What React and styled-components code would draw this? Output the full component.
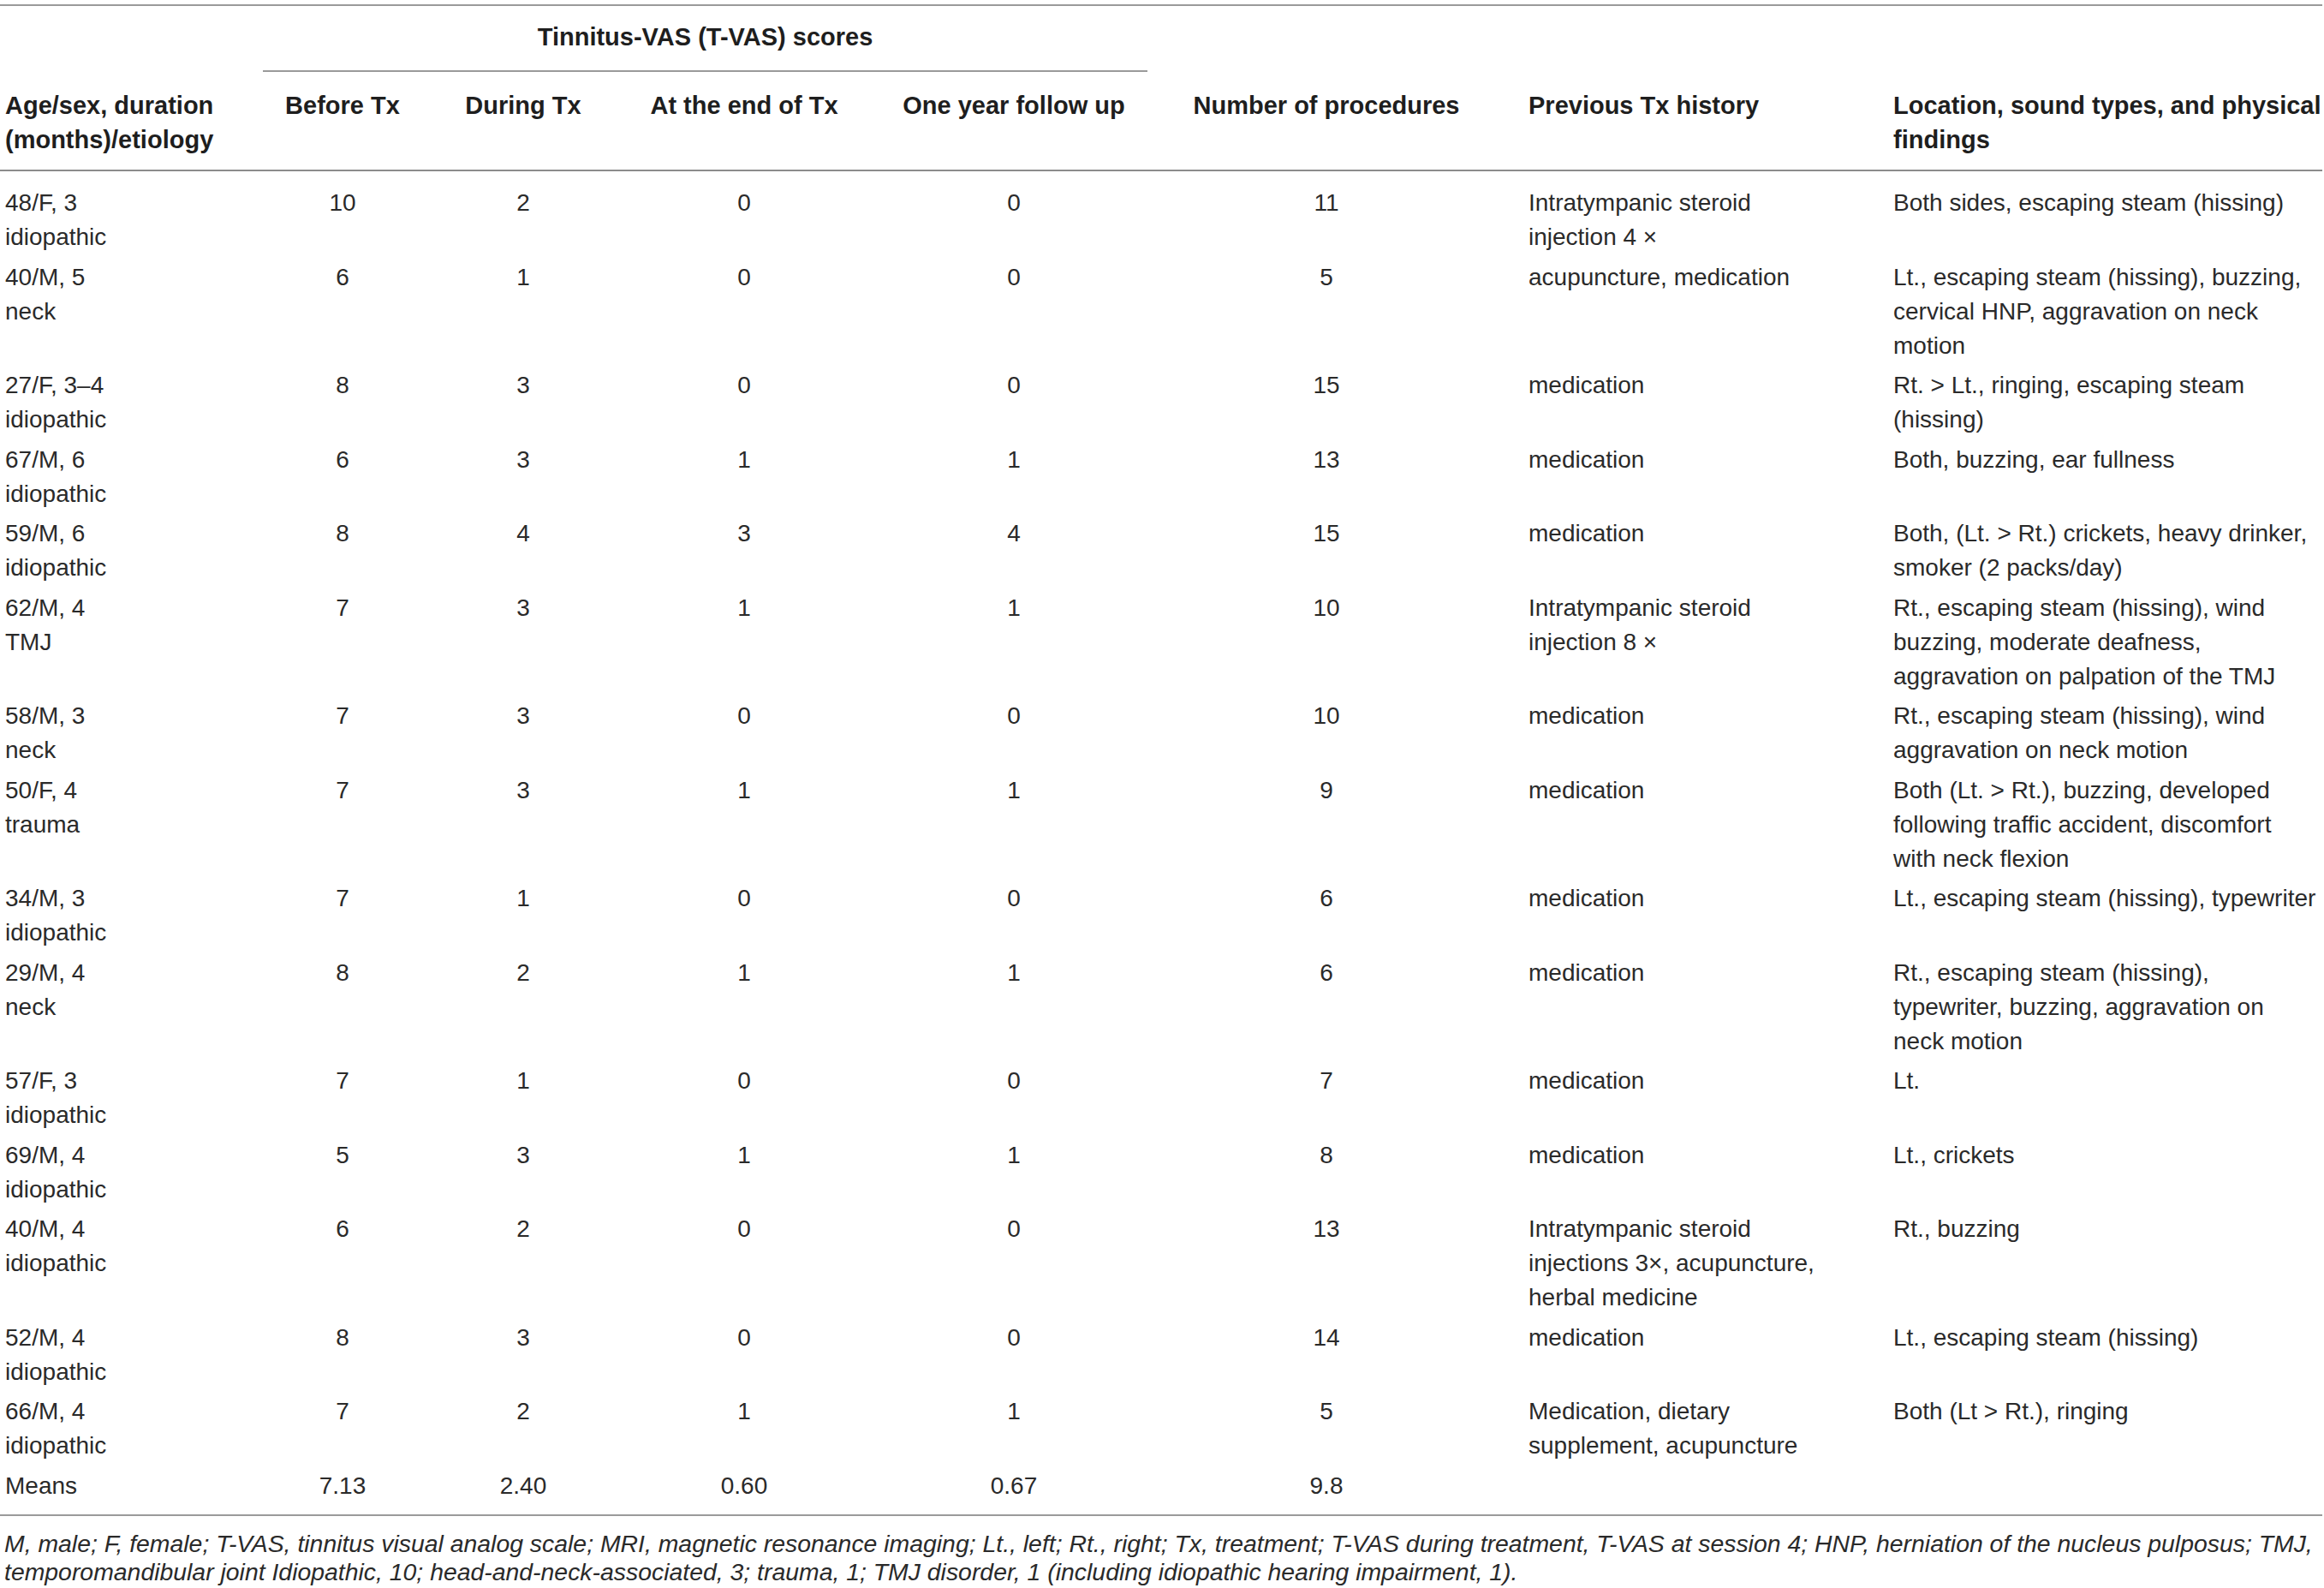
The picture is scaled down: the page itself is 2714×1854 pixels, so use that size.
import React from "react";
import styled, { createGlobalStyle } from "styled-components";

const GlobalStyle = createGlobalStyle`
  html, body {
    margin: 0;
    padding: 0;
    background: #ffffff;
    overflow: hidden;
  }
  body {
    font-family: "Liberation Sans", Arial, sans-serif;
    color: #222222;
  }
`;

const Page = styled.div`
  width: 2714px;
  padding-top: 5px;
`;

const Table = styled.table`
  width: 2712px;
  border-collapse: collapse;
  table-layout: fixed;
  border-top: 2px solid #9a9a9a;
  border-bottom: 2px solid #9a9a9a;
  font-size: 28px;
  line-height: 40px;
`;

const HeadCell = styled.th`
  font-weight: 700;
  font-size: 29px;
  color: #1e1e1e;
  text-align: ${(p) => (p.$align === "left" ? "left" : "center")};
  vertical-align: top;
  padding: ${(p) => (p.$top ? "16px" : "19px")} 0 ${(p) => (p.$top ? "0" : "15px")}
    ${(p) => p.$pl || 0}px;
  white-space: nowrap;
`;

const HeadRow = styled.tr`
  border-bottom: ${(p) => (p.$last ? "2px solid #8c8c8c" : "none")};
`;

const GroupLabel = styled.div`
  border-bottom: 2px solid #9a9a9a;
  padding-bottom: 19px;
  margin-right: 19px;
  text-align: center;
`;

const BodyRow = styled.tr`
  &:first-child td {
    padding-top: 17px;
  }
  &:last-child td {
    padding-bottom: 13px;
  }
`;

const Cell = styled.td`
  font-weight: 400;
  color: #2a2a2a;
  text-align: ${(p) => (p.$align === "left" ? "left" : "center")};
  vertical-align: top;
  padding: 3px 0 3.5px ${(p) => p.$pl || 0}px;
  white-space: nowrap;
`;

const Footnote = styled.p`
  margin: 0;
  padding: 16px 0 0 5px;
  font-style: italic;
  font-size: 28.4px;
  line-height: 33px;
  color: #2a2a2a;
  white-space: nowrap;
`;

const cols = [
  { w: 307, align: "left", pl: 6 },
  { w: 186 },
  { w: 236 },
  { w: 280 },
  { w: 350 },
  { w: 380 },
  { w: 458, align: "left", pl: 46 },
  { w: 515, align: "left", pl: 14 },
];

const rows = [
  [["48/F, 3", "idiopathic"], "10", "2", "0", "0", "11", ["Intratympanic steroid", "injection 4 \u00d7"], ["Both sides, escaping steam (hissing)"]],
  [["40/M, 5", "neck"], "6", "1", "0", "0", "5", ["acupuncture, medication"], ["Lt., escaping steam (hissing), buzzing,", "cervical HNP, aggravation on neck", "motion"]],
  [["27/F, 3\u20134", "idiopathic"], "8", "3", "0", "0", "15", ["medication"], ["Rt. > Lt., ringing, escaping steam", "(hissing)"]],
  [["67/M, 6", "idiopathic"], "6", "3", "1", "1", "13", ["medication"], ["Both, buzzing, ear fullness"]],
  [["59/M, 6", "idiopathic"], "8", "4", "3", "4", "15", ["medication"], ["Both, (Lt. > Rt.) crickets, heavy drinker,", "smoker (2 packs/day)"]],
  [["62/M, 4", "TMJ"], "7", "3", "1", "1", "10", ["Intratympanic steroid", "injection 8 \u00d7"], ["Rt., escaping steam (hissing), wind", "buzzing, moderate deafness,", "aggravation on palpation of the TMJ"]],
  [["58/M, 3", "neck"], "7", "3", "0", "0", "10", ["medication"], ["Rt., escaping steam (hissing), wind", "aggravation on neck motion"]],
  [["50/F, 4", "trauma"], "7", "3", "1", "1", "9", ["medication"], ["Both (Lt. > Rt.), buzzing, developed", "following traffic accident, discomfort", "with neck flexion"]],
  [["34/M, 3", "idiopathic"], "7", "1", "0", "0", "6", ["medication"], ["Lt., escaping steam (hissing), typewriter"]],
  [["29/M, 4", "neck"], "8", "2", "1", "1", "6", ["medication"], ["Rt., escaping steam (hissing),", "typewriter, buzzing, aggravation on", "neck motion"]],
  [["57/F, 3", "idiopathic"], "7", "1", "0", "0", "7", ["medication"], ["Lt."]],
  [["69/M, 4", "idiopathic"], "5", "3", "1", "1", "8", ["medication"], ["Lt., crickets"]],
  [["40/M, 4", "idiopathic"], "6", "2", "0", "0", "13", ["Intratympanic steroid", "injections 3\u00d7, acupuncture,", "herbal medicine"], ["Rt., buzzing"]],
  [["52/M, 4", "idiopathic"], "8", "3", "0", "0", "14", ["medication"], ["Lt., escaping steam (hissing)"]],
  [["66/M, 4", "idiopathic"], "7", "2", "1", "1", "5", ["Medication, dietary", "supplement, acupuncture"], ["Both (Lt > Rt.), ringing"]],
  [["Means"], "7.13", "2.40", "0.60", "0.67", "9.8", [""], [""]],
];

const headers = [
  ["Age/sex, duration", "(months)/etiology"],
  ["Before Tx"],
  ["During Tx"],
  ["At the end of Tx"],
  ["One year follow up"],
  ["Number of procedures"],
  ["Previous Tx history"],
  ["Location, sound types, and physical", "findings"],
];

const Lines = ({ lines }) => {
  const arr = Array.isArray(lines) ? lines : [lines];
  return arr.map((l, i) => (
    <React.Fragment key={i}>
      {i > 0 && <br />}
      {l}
    </React.Fragment>
  ));
};

export default function App() {
  return (
    <>
      <GlobalStyle />
      <Page>
        <Table>
          <colgroup>
            {cols.map((c, i) => (
              <col key={i} style={{ width: c.w }} />
            ))}
          </colgroup>
          <thead>
            <HeadRow>
              <HeadCell $top />
              <HeadCell $top colSpan={4}>
                <GroupLabel>Tinnitus-VAS (T-VAS) scores</GroupLabel>
              </HeadCell>
              <HeadCell $top />
              <HeadCell $top />
              <HeadCell $top />
            </HeadRow>
            <HeadRow $last>
              {headers.map((h, i) => (
                <HeadCell key={i} $align={cols[i].align} $pl={cols[i].pl}>
                  <Lines lines={h} />
                </HeadCell>
              ))}
            </HeadRow>
          </thead>
          <tbody>
            {rows.map((r, ri) => (
              <BodyRow key={ri}>
                {r.map((c, ci) => (
                  <Cell key={ci} $align={cols[ci].align} $pl={cols[ci].pl}>
                    <Lines lines={c} />
                  </Cell>
                ))}
              </BodyRow>
            ))}
          </tbody>
        </Table>
        <Footnote>
          M, male; F, female; T-VAS, tinnitus visual analog scale; MRI, magnetic resonance imaging; Lt., left; Rt., right; Tx,
          treatment; T-VAS during treatment, T-VAS at session 4; HNP, herniation of the nucleus pulposus; TMJ,
          <br />
          temporomandibular joint Idiopathic, 10; head-and-neck-associated, 3; trauma, 1; TMJ disorder, 1 (including idiopathic
          hearing impairment, 1).
        </Footnote>
      </Page>
    </>
  );
}
